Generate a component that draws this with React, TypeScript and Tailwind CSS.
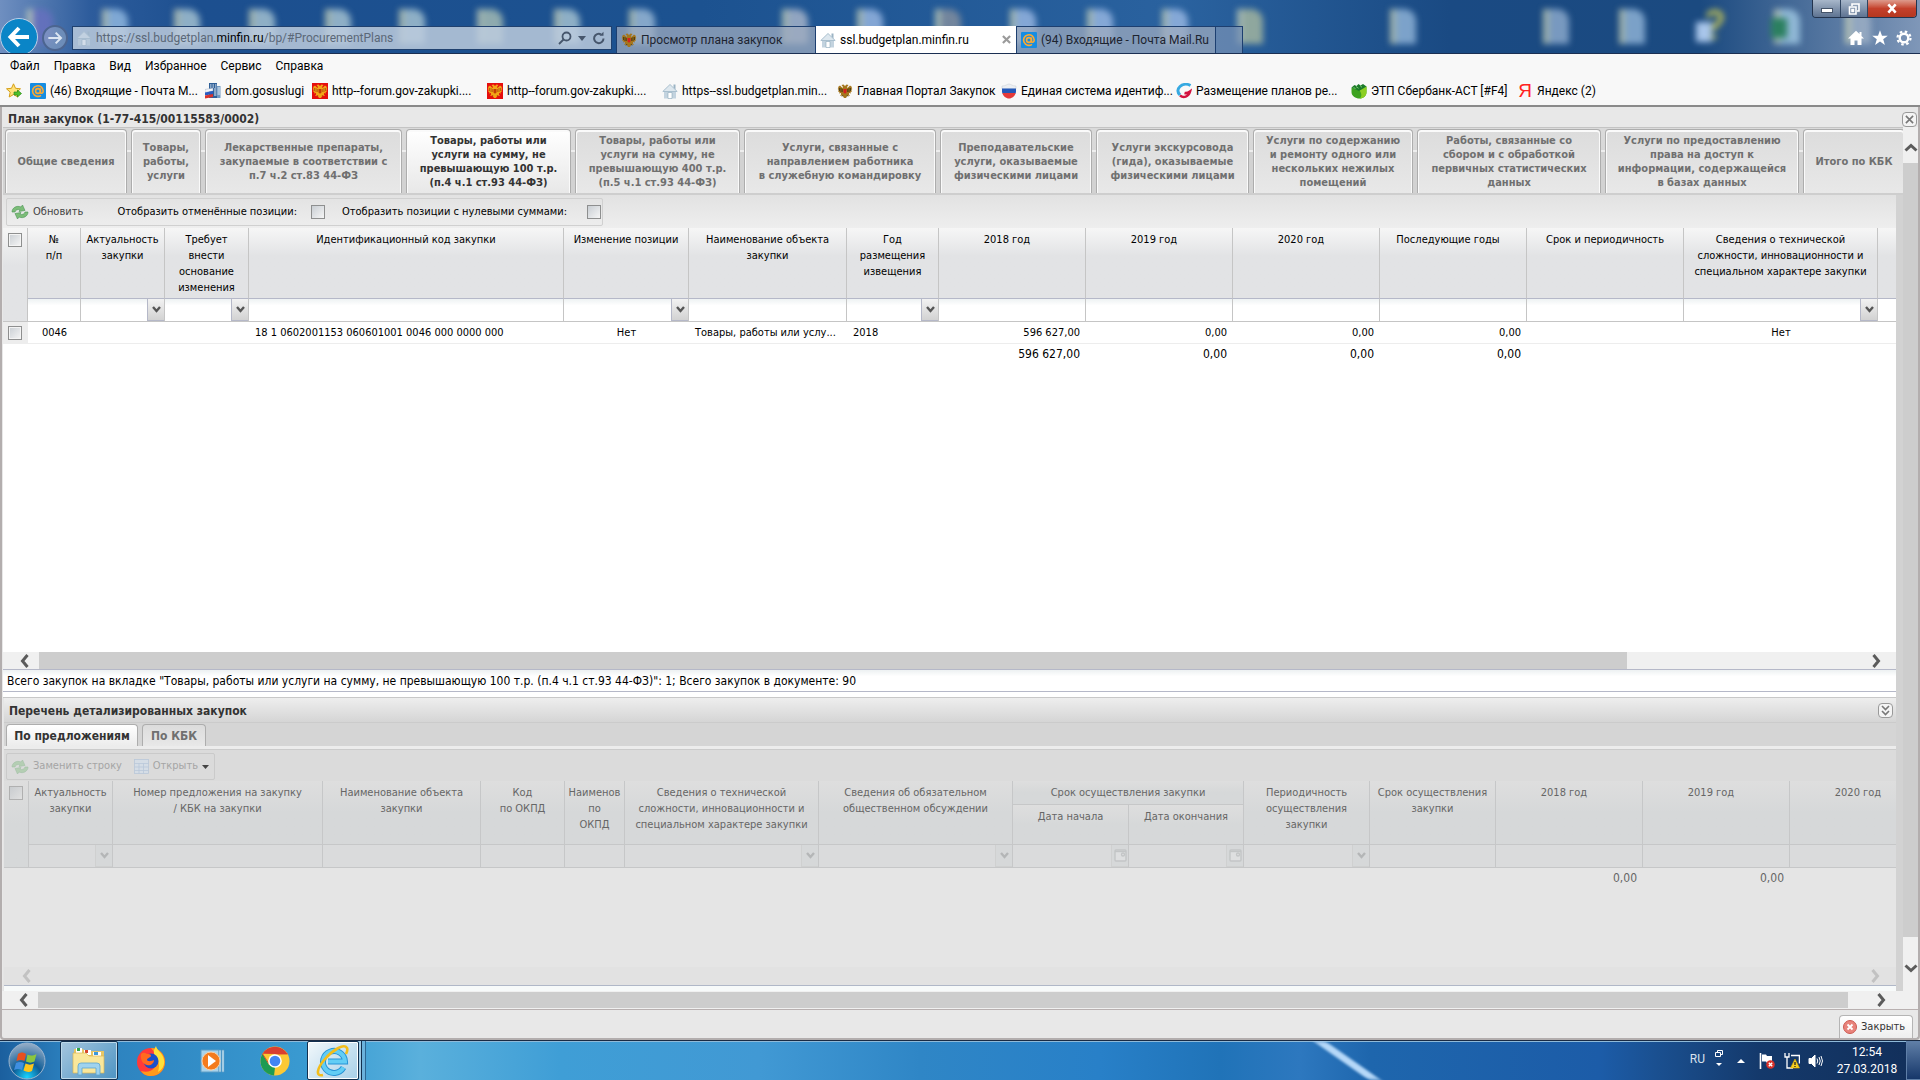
import React from 'react';

type FilterKind = 'none' | 'text' | 'select' | 'date';

interface Column {
  label: string;
  width: string;
  filter: FilterKind;
  numeric?: boolean;
}

const planTabs = [
  { label: 'Общие сведения', width: 'w-[122px]' },
  { label: 'Товары,\nработы,\nуслуги', width: 'w-[70px]' },
  { label: 'Лекарственные препараты,\nзакупаемые в соответствии с\nп.7 ч.2 ст.83 44-ФЗ', width: 'w-[197px]' },
  { label: 'Товары, работы или\nуслуги на сумму, не\nпревышающую 100 т.р.\n(п.4 ч.1 ст.93 44-ФЗ)', width: 'w-[165px]', active: true },
  { label: 'Товары, работы или\nуслуги на сумму, не\nпревышающую 400 т.р.\n(п.5 ч.1 ст.93 44-ФЗ)', width: 'w-[165px]' },
  { label: 'Услуги, связанные с\nнаправлением работника\nв служебную командировку', width: 'w-[192px]' },
  { label: 'Преподавательские\nуслуги, оказываемые\nфизическими лицами', width: 'w-[152px]' },
  { label: 'Услуги экскурсовода\n(гида), оказываемые\nфизическими лицами', width: 'w-[153px]' },
  { label: 'Услуги по содержанию\nи ремонту одного или\nнескольких нежилых\nпомещений', width: 'w-[160px]' },
  { label: 'Работы, связанные со\nсбором и с обработкой\nпервичных статистических\nданных', width: 'w-[184px]' },
  { label: 'Услуги по предоставлению\nправа на доступ к\nинформации, содержащейся\nв базах данных', width: 'w-[194px]' },
  { label: 'Итого по КБК', width: 'w-[102px]' },
];

const planColumns: Column[] = [
  { label: '№\nп/п', width: 'w-[53px]', filter: 'text' },
  { label: 'Актуальность\nзакупки', width: 'w-[84px]', filter: 'select' },
  { label: 'Требует\nвнести\nоснование\nизменения', width: 'w-[84px]', filter: 'select' },
  { label: 'Идентификационный код закупки', width: 'w-[315px]', filter: 'text' },
  { label: 'Изменение позиции', width: 'w-[125px]', filter: 'select' },
  { label: 'Наименование объекта\nзакупки', width: 'w-[158px]', filter: 'text' },
  { label: 'Год\nразмещения\nизвещения', width: 'w-[92px]', filter: 'select' },
  { label: '2018 год', width: 'w-[147px]', filter: 'text', numeric: true },
  { label: '2019 год', width: 'w-[147px]', filter: 'text', numeric: true },
  { label: '2020 год', width: 'w-[147px]', filter: 'text', numeric: true },
  { label: 'Последующие годы', width: 'w-[147px]', filter: 'text', numeric: true },
  { label: 'Срок и периодичность', width: 'w-[157px]', filter: 'text' },
  { label: 'Сведения о технической\nсложности, инновационности и\nспециальном характере закупки', width: 'w-[194px]', filter: 'select' },
];

const planRow = ['0046', '', '', '18 1 0602001153 060601001 0046 000 0000 000', 'Нет', 'Товары, работы или услу...', '2018', '596 627,00', '0,00', '0,00', '0,00', '', 'Нет'];
const planRowAlign = ['text-center', '', '', 'text-left', 'text-center', 'text-left', 'text-left', 'text-right', 'text-right', 'text-right', 'text-right', '', 'text-center'];
const planTotals = ['', '', '', '', '', '', '', '596 627,00', '0,00', '0,00', '0,00', '', ''];

const detailColumns: Column[] = [
  { label: 'Актуальность\nзакупки', width: 'w-[84px]', filter: 'select' },
  { label: 'Номер предложения на закупку\n/ КБК на закупки', width: 'w-[210px]', filter: 'text' },
  { label: 'Наименование объекта\nзакупки', width: 'w-[158px]', filter: 'text' },
  { label: 'Код\nпо ОКПД', width: 'w-[84px]', filter: 'text' },
  { label: 'Наименов\nпо\nОКПД', width: 'w-[60px]', filter: 'text' },
  { label: 'Сведения о технической\nсложности, инновационности и\nспециальном характере закупки', width: 'w-[194px]', filter: 'select' },
  { label: 'Сведения об обязательном\nобщественном обсуждении', width: 'w-[194px]', filter: 'select' },
  { label: 'Дата начала', width: 'w-[116px]', filter: 'date' },
  { label: 'Дата окончания', width: 'w-[115px]', filter: 'date' },
  { label: 'Периодичность\nосуществления\nзакупки', width: 'w-[126px]', filter: 'select' },
  { label: 'Срок осуществления\nзакупки', width: 'w-[126px]', filter: 'text' },
  { label: '2018 год', width: 'w-[147px]', filter: 'text', numeric: true },
  { label: '2019 год', width: 'w-[147px]', filter: 'text', numeric: true },
  { label: '2020 год', width: 'w-[147px]', filter: 'text', numeric: true },
];

/* ---------- small drawings ---------- */

function EagleIcon({ red = false }: { red?: boolean }) {
  const fill = red ? '#f2a516' : '#a5761c';
  return (
    <svg viewBox="0 0 16 16" className="size-4 shrink-0">
      {red && <rect width="16" height="16" fill="#e60d0d" />}
      <path fill={fill} d="M8 3 6.500 1.500 4.500 2l1.500 2-.5 1L3 2.500 1 4l.5 1L.7 6l1 1L1 8.500l1.500.5L2 10.500l2-.5v1.500L3 13l2.500-.5L7 15h2l1.500-2.500L13 13l-1-1.500V10l2 .5L13.500 9l1.500-.5L14.300 7l1-1-.8-1 .5-1L13 2.500 10.500 5 10 4l1.500-2-2-.5z" />
      <path fill="none" d="M2.500 5v3M4 5v4M5.300 6v3M10.700 6v3M12 5v4M13.500 5v3M6 12l-1 1.500M10 12l1 1.500" stroke={red ? '#b0500a' : '#3f3410'} strokeWidth=".8" />
      <path d="M6.500 6h3v3.500L8 10.800 6.500 9.500z" fill={red ? '#c23a06' : '#d41f1f'} />
    </svg>
  );
}

function HouseIcon() {
  return (
    <svg viewBox="0 0 16 16" className="size-4 shrink-0">
      <path d="M2 8h12v7.500H2z" fill="#c3d3df" />
      <path d="M11.500 1.500h2V7l-2-2z" fill="#9bb3c4" />
      <path d="M.8 8.500 8 1.500l7.200 7z" fill="#dde7ee" stroke="#a9bfce" />
      <path d="M6 9.500h4v6H6z" fill="#fff" stroke="#8ba7bb" strokeWidth=".6" />
    </svg>
  );
}

function MailIcon() {
  return (
    <svg viewBox="0 0 16 16" className="size-4 shrink-0">
      <rect width="16" height="16" rx="1" fill="#168de2" />
      <g fill="none" stroke="#ffa930" strokeWidth="1.600">
        <circle cx="8" cy="8" r="2.400" />
        <path d="M10.400 5.500V9c0 2 2.800 1.600 2.800-1A5.300 5.300 0 1 0 11 12.400" />
      </g>
    </svg>
  );
}

function AddFavoriteIcon() {
  return (
    <svg viewBox="0 0 16 16" className="size-4 shrink-0">
      <path d="m7.500.8 2 4.500 5 .5-3.700 3.300 1 4.900-4.300-2.500L3.200 14l1-4.900L.5 5.800l5-.5z" fill="#ffe27a" stroke="#d59f17" />
      <path d="M8 9h3.500V7l4 3.500-4 3.500v-2H8z" fill="#4ec02c" stroke="#2b8a17" strokeWidth=".7" />
    </svg>
  );
}

function BuildingIcon() {
  return (
    <svg viewBox="0 0 16 16" className="size-4 shrink-0">
      <path d="M4 0h8v15H4z" fill="#2f5f97" />
      <path d="M12 3h3.500v12H12z" fill="#6f98c2" />
      <path d="M5 2h1.500M7.500 2H9M10 2h1.500M5 4h1.500M7.500 4H9M10 4h1.500M9 6h2.500M9 8h2.500M9 10h2.500M9 12h2.500M12.500 5h2.500M12.500 7h2.500M12.500 9h2.500M12.500 11h2.500" stroke="#e8f0f8" />
      <path d="M0 6.500 8 5v3L0 9.500z" fill="#f4f6fa" stroke="#8ba0bb" strokeWidth=".4" />
      <path d="M0 9.500 8 8v3l-8 1.500z" fill="#2a5bc0" />
      <path d="M0 12.500 8 11v3L0 15.500z" fill="#d9322c" />
    </svg>
  );
}

function ShieldFlagIcon() {
  return (
    <svg viewBox="0 0 16 16" className="size-4 shrink-0">
      <path d="M1 3c4 0 5-2 7-2s3 2 7 2v3H1z" fill="#eceff3" stroke="#c7ccd3" strokeWidth=".5" />
      <path d="M1 5.500h14V9l-.5 1.500h-13L1 9z" fill="#2458b8" />
      <path d="M1.300 10h13.400C14 13 11 15.500 8 15.500S2 13 1.300 10z" fill="#e53a3a" />
    </svg>
  );
}

function SwirlIcon() {
  return (
    <svg viewBox="0 0 16 16" className="size-4 shrink-0" fill="none">
      <path d="M14.500 2.500C11.500.8 7 .8 4 3.500s-2.500 6 0 8.500" stroke="#36a9e1" strokeWidth="3" />
      <path d="M4 12.500c3.500 2.800 8.500 1.500 10-4-2 1.500-3.500 2-5.500 1.500" stroke="#d3123f" strokeWidth="2.600" />
    </svg>
  );
}

function SberIcon() {
  return (
    <svg viewBox="0 0 16 16" className="size-4 shrink-0">
      <path d="M.5 4.500 8 7l7.500-3.500v5.500c0 4-3 6.500-7 6.500S.5 13 .5 9z" fill="#3ea321" />
      <path d="M8 7l7.500-3.500v5.500c0 4-3 6.500-7 6.500 3-2 2-6-.5-8.500z" fill="#8ccf22" />
      <path d="M.5 4.500 3.500 2l2 1 2-2 2 1.500L12 1l3.500 2.500L8 8z" fill="#1c7a2a" />
      <path d="m2.500 4.500 2 1M5 3.500l2.500 1.800M9 2.500l2 1.800" stroke="#8fe07f" strokeWidth=".8" />
    </svg>
  );
}

function RefreshIcon() {
  return (
    <svg viewBox="0 0 18 16" className="h-4 w-[18px] shrink-0" fill="#7cbd78" stroke="#4b9455" strokeWidth=".6">
      <path d="M1 8c0-4 4.500-7 9-5l1.500-2L14 6.500 8 7.500l1-1.700C6.500 5 4.500 6 4 8z" />
      <path d="M17 8c0 4-4.500 7-9 5l-1.500 2L4 9.500l6-1-1 1.700c2.500.8 4.500-.2 5-2.200z" />
    </svg>
  );
}

function Chevron({ dir, faded = false }: { dir: 'left' | 'right' | 'up' | 'down'; faded?: boolean }) {
  const d = { left: 'M9.500 1 4.500 7l5 6', right: 'M4.500 1l5 6-5 6', up: 'M1.500 9.500 7 4.500l5.500 5', down: 'M1.500 4.500 7 9.500l5.500-5' }[dir];
  return (
    <svg viewBox="0 0 14 14" className="size-[14px] shrink-0" fill="none" stroke={faded ? '#c2c2c2' : '#5b5b5b'} strokeWidth="3">
      <path d={d} />
    </svg>
  );
}

/* ---------- browser frame ---------- */

const desktopIcons = [
  { x: 40, tone: 'bg-[#6a6fc0]' }, { x: 115, tone: 'bg-[#9dc3e8]' }, { x: 187, tone: 'bg-[#b4cfd8]' }, { x: 262, tone: 'bg-[#b4cfd8]' },
  { x: 338, tone: 'bg-[#b4cfd8]' }, { x: 412, tone: 'bg-[#b4cfd8]' }, { x: 490, tone: 'bg-[#b5c9b8]' }, { x: 567, tone: 'bg-[#b4cfd8]' },
  { x: 642, tone: 'bg-[#a9c4de]' }, { x: 795, tone: 'bg-[#b9c0d0]' }, { x: 870, tone: 'bg-[#a4c0ea]' }, { x: 948, tone: 'bg-[#8e959f]' },
  { x: 1023, tone: 'bg-[#a4c0ea]' }, { x: 1100, tone: 'bg-[#a4c0ea]' }, { x: 1175, tone: 'bg-[#a4c0ea]' }, { x: 1250, tone: 'bg-[#b3c0a0]' },
  { x: 1403, tone: 'bg-[#9dbfe0]' }, { x: 1556, tone: 'bg-[#98b4d4]' }, { x: 1632, tone: 'bg-[#9dbfe0]' },
  { x: 1787, tone: 'bg-[#a9d0ea]' }, { x: 1858, tone: 'bg-[#a3b4c8]' },
];

function BrowserHeader() {
  return (
    <header className="relative flex h-[54px] shrink-0 overflow-hidden border-b border-[#1b2f52] bg-[linear-gradient(90deg,#6f8fc0_0px,#2d5c9c_90px,#1c4f8f_200px,#1c5290_700px,#2a629f_1180px,#1a4a83_1450px,#1b4a80_1700px,#6c88ad_1880px,#7f97b8_1920px)]">
      <div className="absolute inset-0 blur-[3px]" aria-hidden="true">
        {desktopIcons.map((icon) => (
          <span key={icon.x} className={`absolute top-[9px] flex h-[35px] w-[26px] -translate-x-1/2 rounded-tr-xl opacity-75 ${icon.tone}`} style={{ left: icon.x }}>
            <span className="h-full w-[6px] bg-[#c8d2b8]" />
          </span>
        ))}
        {/* help shortcut: sheet with a yellow question mark */}
        <svg viewBox="0 0 32 36" className="absolute top-[9px] left-[1694px] h-9 w-8" fill="none">
          <path d="M2 13h16v20H2z" fill="#a9c6ea" />
          <path d="M14 8c2-8 15-6 13 2-1 5-7 5-7 11M20 26v4" stroke="#b5b95a" strokeWidth="5" />
        </svg>
        <span className="absolute top-[18px] left-[1771px] h-5 w-4 bg-[#2c8060]" />
      </div>
      <div className="relative flex w-[1244px] items-end">
        <button aria-label="Назад" className="mt-[18px] flex size-[38px] shrink-0 self-start items-center justify-center rounded-full border border-[#bcd0e8] bg-[#0a85c7]">
          <svg viewBox="0 0 24 24" className="size-6" fill="none" stroke="#fff" strokeWidth="4">
            <path d="M12 3 3.500 12l8.500 9M4 12h18" />
          </svg>
        </button>
        <button aria-label="Вперёд" className="mt-[25px] ml-1 flex size-[26px] shrink-0 self-start items-center justify-center rounded-full border-2 border-[#4c6590] bg-[#8ba3c4]/60">
          <svg viewBox="0 0 24 24" className="size-4" fill="none" stroke="#dbe5f2" strokeWidth="3">
            <path d="m13 4 8 8-8 8M21 12H2" />
          </svg>
        </button>
        <div className="mb-[3px] ml-1 flex h-6 w-[540px] shrink-0 items-center gap-2 border border-[#20416f] bg-[#bccbdd]/85 pr-[5px] pl-[3px]">
          <span className="opacity-50"><HouseIcon /></span>
          <div className="-ml-1 flex-1 text-xs whitespace-nowrap text-[#5b6878]">
            https://ssl.budgetplan.<span className="text-black">minfin.ru</span>/bp/#ProcurementPlans
          </div>
          <div className="flex items-center gap-[6px]">
            <svg viewBox="0 0 14 14" className="size-[14px]" fill="none" stroke="#46566c" strokeWidth="1.800">
              <circle cx="8.500" cy="5.500" r="4" />
              <path d="M5.500 8.500 1 13" />
            </svg>
            <svg viewBox="0 0 8 5" className="h-[5px] w-2" fill="#46566c"><path d="M0 0h8L4 5z" /></svg>
            <svg viewBox="0 0 14 14" className="size-[14px]" fill="none" stroke="#46566c" strokeWidth="2">
              <path d="M11.500 7.500A4.700 4.700 0 1 1 9 3.300" />
              <path d="M7.500 4.800h4V.8z" fill="#46566c" stroke="none" />
            </svg>
          </div>
        </div>
        <nav className="ml-1 flex h-[27px] min-w-0 text-xs text-[#1d2430]">
          <button className="flex w-[200px] items-center gap-1 border border-b-0 border-[#1d3f70] bg-[#9dabbf]/75 px-1 whitespace-nowrap">
            <EagleIcon />
            Просмотр плана закупок
          </button>
          <button className="flex w-[200px] items-center gap-1 bg-white px-1 whitespace-nowrap text-black">
            <HouseIcon />
            ssl.budgetplan.minfin.ru
            <svg viewBox="0 0 10 10" className="mr-px ml-auto size-[9px]" stroke="#9b9b9b" strokeWidth="2.400"><path d="m1 1 8 8M9 1 1 9" /></svg>
          </button>
          <button className="flex w-[200px] items-center gap-1 border border-b-0 border-[#1d3f70] bg-[#9dabbf]/75 px-1 whitespace-nowrap">
            <MailIcon />
            (94) Входящие - Почта Mail.Ru
          </button>
          <button aria-label="Новая вкладка" className="w-[27px] border-t border-r border-[#1d3f70] bg-[#7590b4]/75" />
        </nav>
      </div>
      <div className="relative ml-auto flex flex-col items-end pr-[3px]">
        <div className="flex h-[18px] overflow-hidden rounded-b border border-t-0 border-[#23344e]">
          <button aria-label="Свернуть" className="flex w-7 items-center justify-center border-r border-[#2f4460] bg-gradient-to-b from-[#a8b7ca] to-[#5e7391]">
            <span className="mt-1 h-[5px] w-3 border border-[#45546a] bg-white" />
          </button>
          <button aria-label="Развернуть" className="flex w-[27px] items-center justify-center border-r border-[#2f4460] bg-gradient-to-b from-[#a8b7ca] to-[#5e7391]">
            <svg viewBox="0 0 12 12" className="size-3" fill="none" stroke="#fff" strokeWidth="1.600"><path d="M4 3V1h7v7H9M1.500 4H8v7H1.500zM4 6.500h1.500v2H4z" /></svg>
          </button>
          <button aria-label="Закрыть окно" className="flex w-12 items-center justify-center bg-gradient-to-b from-[#dd9a8c] via-[#c4402b] to-[#b5371f]">
            <svg viewBox="0 0 12 12" className="h-[11px] w-3" stroke="#fff" strokeWidth="2.800"><path d="m2 1.500 8 9M10 1.500l-8 9" /></svg>
          </button>
        </div>
        <div className="mt-3 flex items-center gap-2 pr-[5px]">
          <svg viewBox="0 0 16 16" className="size-4" fill="#fff"><path d="M8 .8 0 8.500h2.500V15H6.500v-4.500h3V15h4V8.500H16l-2.500-2.500V2h-2v2z" /></svg>
          <svg viewBox="0 0 16 16" className="size-4" fill="#fff"><path d="m8 .3 2 5.400h5.800l-4.600 3.500 1.700 5.800L8 11.600 3.100 15l1.700-5.800L.2 5.700H6z" /></svg>
          <svg viewBox="0 0 16 16" className="size-4" fill="none" stroke="#fff">
            <circle cx="8" cy="8" r="4.300" strokeWidth="2.400" />
            <circle cx="8" cy="8" r="6.500" strokeWidth="2.200" strokeDasharray="2.550 2.550" />
          </svg>
        </div>
      </div>
    </header>
  );
}

const menuItems = ['Файл', 'Правка', 'Вид', 'Избранное', 'Сервис', 'Справка'];

const favorites = [
  { label: '(46) Входящие - Почта М...', icon: <MailIcon />, width: 'w-[175px]' },
  { label: 'dom.gosuslugi', icon: <BuildingIcon />, width: 'w-[107px]' },
  { label: 'http--forum.gov-zakupki....', icon: <EagleIcon red />, width: 'w-[175px]' },
  { label: 'http--forum.gov-zakupki....', icon: <EagleIcon red />, width: 'w-[175px]' },
  { label: 'https--ssl.budgetplan.min...', icon: <HouseIcon />, width: 'w-[175px]' },
  { label: 'Главная Портал Закупок', icon: <EagleIcon />, width: 'w-[164px]' },
  { label: 'Единая система идентиф...', icon: <ShieldFlagIcon />, width: 'w-[175px]' },
  { label: 'Размещение планов ре...', icon: <SwirlIcon />, width: 'w-[175px]' },
  { label: 'ЭТП Сбербанк-АСТ [#F4]', icon: <SberIcon />, width: 'w-[166px]' },
  { label: 'Яндекс (2)', icon: <span className="w-4 text-center font-['Liberation_Sans'] text-[19px] leading-4 text-[#f22]">Я</span>, width: 'w-[100px]' },
];

function BrowserMenus() {
  return (
    <div className="shrink-0 border-b-2 border-[#8a8a8a] bg-[#f8f8f8] text-xs text-black">
      <nav className="flex h-6 items-center gap-[14px] px-[10px]">
        {menuItems.map((item) => (
          <button key={item}>{item}</button>
        ))}
      </nav>
      <nav className="flex h-[27px] items-center overflow-hidden pb-px pl-[6px]">
        <button aria-label="Добавить в избранное" className="mr-2"><AddFavoriteIcon /></button>
        {favorites.map((fav, i) => (
          <a key={i} href="#" className={`flex shrink-0 items-center gap-1 whitespace-nowrap ${fav.width}`}>
            {fav.icon}
            {fav.label}
          </a>
        ))}
      </nav>
    </div>
  );
}

/* ---------- grid parts ---------- */

function Tick({ label, faded = false }: { label: string; faded?: boolean }) {
  return (
    <input
      type="checkbox"
      aria-label={label}
      className={`block size-[14px] shrink-0 appearance-none border bg-gradient-to-br ${faded ? 'border-[#b0b0b0] from-[#c9cccf] to-[#e0e0e0]' : 'border-[#8e8f8f] from-[#c9ced3] to-[#f6f6f6] shadow-[inset_0_0_0_1px_#f4f4f4]'}`}
    />
  );
}

function FilterCell({ column, faded }: { column: Column; faded: boolean }) {
  const box = faded ? 'bg-transparent' : 'bg-gradient-to-b from-[#eef2f3] to-white to-30%';
  const trigger = faded ? 'border-[#cfd0d0] bg-[#d6d8d9]' : 'border-[#b5b8c8] bg-gradient-to-b from-[#f2f2f2] to-[#d2d2d2]';
  if (column.filter === 'select') {
    return (
      <div className="relative h-full">
        <select aria-label={column.label} className={`block h-full w-full appearance-none outline-none ${box}`} disabled={faded} />
        <span className={`pointer-events-none absolute top-0 right-0 flex h-full w-[17px] items-center justify-center border-b border-l ${trigger}`}>
          <svg viewBox="0 0 9 7" className="mb-px h-[7px] w-[9px]" fill="none" stroke={faded ? '#b4b6b7' : '#555'} strokeWidth="2.400"><path d="m1 1 3.500 4L8 1" /></svg>
        </span>
      </div>
    );
  }
  return (
    <div className="relative h-full">
      <input aria-label={column.label} className={`block h-full w-full outline-none ${box}`} disabled={faded} />
      {column.filter === 'date' && (
        <span className={`pointer-events-none absolute top-0 right-0 flex h-full w-[17px] items-center justify-center border-b border-l ${trigger}`}>
          <svg viewBox="0 0 13 13" className="size-[13px]" fill="#dedfe0" stroke="#c3c5c6" strokeWidth="1.400">
            <rect x="1" y="1" width="11" height="11" rx="1" />
            <path d="M1 2.500h11" />
            <circle cx="9" cy="5.500" r="1.500" />
          </svg>
        </span>
      )}
    </div>
  );
}

const headText = 'whitespace-pre text-center leading-4 font-normal overflow-hidden';

function PlanGrid() {
  return (
    <table className="w-full table-fixed border-separate border-spacing-0 text-[11px] text-black">
      <colgroup>
        <col className="w-[25px]" />
        {planColumns.map((c) => <col key={c.label} className={c.width} />)}
        <col />
      </colgroup>
      <thead>
        <tr className="h-[71px] align-top">
          <th rowSpan={2} className="border-r border-b border-[#c5c5c5] bg-gradient-to-b from-[#f6f6f6] to-[#e2e3e5] to-40% pt-[5px] pl-[5px]">
            <Tick label="Выбрать все" />
          </th>
          {planColumns.map((c) => (
            <th key={c.label} className={`border-r border-b border-r-[#c5c5c5] border-b-[#b5b8c8] bg-gradient-to-b from-[#f6f6f6] to-[#e2e3e5] to-40% pt-1 ${headText} ${c.numeric ? 'pr-[10px]' : ''}`}>
              {c.label}
            </th>
          ))}
          <th className="border-b border-[#b5b8c8] bg-gradient-to-b from-[#f6f6f6] to-[#e2e3e5] to-40%" />
        </tr>
        <tr className="h-[23px]">
          {planColumns.map((c) => (
            <td key={c.label} className="h-[23px] border-r border-b border-[#c5c5c5] p-0"><FilterCell column={c} faded={false} /></td>
          ))}
          <td className="border-b border-[#c5c5c5]" />
        </tr>
      </thead>
      <tbody>
        <tr className="h-[22px]">
          <td className="border-r border-b border-[#ededed] bg-[#ededed] pl-[5px]"><Tick label="Выбрать 0046" /></td>
          {planRow.map((cell, i) => (
            <td key={i} className={`border-b border-[#ededed] px-[6px] pt-[2px] whitespace-nowrap ${planRowAlign[i]}`}>{cell}</td>
          ))}
          <td className="border-b border-[#ededed]" />
        </tr>
        <tr className="h-5 text-xs">
          <td />
          {planTotals.map((cell, i) => (
            <td key={i} className="px-[6px] text-right whitespace-nowrap">{cell}</td>
          ))}
          <td />
        </tr>
      </tbody>
    </table>
  );
}

function DetailGrid() {
  const plain = 'border-r border-b border-[#c6c7c8] bg-gradient-to-b from-[#dedede] to-[#d6d8d9] to-50%';
  return (
    <table className="w-[1933px] table-fixed border-separate border-spacing-0 text-[11px] text-[#666]">
      <colgroup>
        <col className="w-[25px]" />
        {detailColumns.map((c) => <col key={c.label} className={c.width} />)}
      </colgroup>
      <thead>
        <tr className="h-6 align-top">
          <th rowSpan={3} className={`pt-[5px] pl-[5px] ${plain}`}><Tick label="Выбрать все строки" faded /></th>
          {detailColumns.slice(0, 7).map((c) => (
            <th key={c.label} rowSpan={2} className={`pt-1 ${plain} ${headText}`}>{c.label}</th>
          ))}
          <th colSpan={2} className={`pt-1 ${plain} ${headText}`}>Срок осуществления закупки</th>
          {detailColumns.slice(9).map((c) => (
            <th key={c.label} rowSpan={2} className={`pt-1 ${plain} ${headText} ${c.numeric ? 'pr-[10px]' : ''}`}>{c.label}</th>
          ))}
        </tr>
        <tr className="h-10 align-top">
          {detailColumns.slice(7, 9).map((c) => (
            <th key={c.label} className={`pt-1 ${plain} ${headText}`}>{c.label}</th>
          ))}
        </tr>
        <tr className="h-[23px]">
          {detailColumns.map((c) => (
            <td key={c.label} className="h-[23px] border-r border-b border-[#c6c7c8] bg-[#dadbdc] p-0"><FilterCell column={c} faded /></td>
          ))}
        </tr>
      </thead>
      <tbody>
        <tr className="h-5 text-xs">
          <td />
          {detailColumns.map((c, i) => (
            <td key={c.label} className="px-[6px] text-right">{i === 11 || i === 12 ? '0,00' : ''}</td>
          ))}
        </tr>
      </tbody>
    </table>
  );
}

/* ---------- application window ---------- */

function PlanTabs() {
  return (
    <div className="flex shrink-0 gap-1 overflow-hidden border-t border-b-2 border-t-[#c4c4c4] border-b-[#cecece] bg-[linear-gradient(#dadada_0px,#d8d8d8_22px,#eee_22px,#eee_24px,#d2d2d2_24px)] pt-px pl-[2px]">
      {planTabs.map((tab) => (
        <button
          key={tab.label}
          className={`flex h-16 shrink-0 items-center justify-center rounded-t border border-b-0 border-[#adadad] pt-px text-[11px] leading-[14px] font-bold whitespace-pre shadow-[inset_0_1px_0_1px_#fafafa] ${tab.width} ${tab.active ? 'bg-gradient-to-b from-white to-[#e8e8e8] text-[#333]' : 'bg-gradient-to-b from-[#dcdcdc] to-[#e8e8e8] text-[#707070]'}`}
        >
          {tab.label}
        </button>
      ))}
    </div>
  );
}

function PlanWindow() {
  return (
    <main className="flex min-h-0 flex-1 flex-col rounded-b border-x-2 border-b-2 border-[#b3aeae] bg-[#e8e8e8] font-['DejaVu_Sans_Condensed','DejaVu_Sans',sans-serif]">
      <div className="flex h-5 shrink-0 items-center justify-between pr-px pl-[6px]">
        <h1 className="pt-1 text-xs leading-4 font-bold text-[#333]">План закупок (1-77-415/00115583/0002)</h1>
        <button aria-label="Закрыть план" className="mt-1 flex size-[15px] items-center justify-center rounded-sm border border-[#999] bg-[#f4f4f4]">
          <svg viewBox="0 0 10 10" className="size-[9px]" stroke="#777" strokeWidth="1.800"><path d="m1 1 8 8M9 1 1 9" /></svg>
        </button>
      </div>
      <div className="flex min-h-0 flex-1">
        <div className="flex min-w-0 flex-1 flex-col pl-px">
          <PlanTabs />
          <div className="flex min-h-0 flex-1 flex-col border-r-7 border-[#d2d2d2] bg-white">
            <div className="h-[33px] shrink-0 bg-gradient-to-b from-[#e2e2e2] to-[#eee] pt-[3px] pl-[3px]">
              <div className="flex h-7 w-[597px] items-center rounded-xs border border-[#d0d0d0] text-[11px] whitespace-nowrap text-black">
                <button className="flex items-center gap-1 px-1 text-[#444]">
                  <RefreshIcon />
                  Обновить
                </button>
                <label htmlFor="cancelled" className="ml-auto">Отобразить отменённые позиции:</label>
                <input id="cancelled" type="checkbox" className="ml-[14px] size-[14px] shrink-0 appearance-none border border-[#8e8f8f] bg-gradient-to-br from-[#c9ced3] to-[#f6f6f6]" />
                <label htmlFor="zero" className="ml-[17px]">Отобразить позиции с нулевыми суммами:</label>
                <input id="zero" type="checkbox" className="mr-px ml-5 size-[14px] shrink-0 appearance-none border border-[#8e8f8f] bg-gradient-to-br from-[#c9ced3] to-[#f6f6f6]" />
              </div>
            </div>
            <div className="min-h-[140px] flex-1 overflow-hidden">
              <PlanGrid />
            </div>
            <div className="flex h-[17px] shrink-0 items-center bg-[#f0f0f0]">
              <div className="flex w-9 justify-center pl-2"><Chevron dir="left" /></div>
              <div className="h-full flex-1"><div className="h-full w-[88%] bg-[#cdcdcd]" /></div>
              <div className="flex w-[52px] justify-center pl-3"><Chevron dir="right" /></div>
            </div>
            <div className="h-[23px] shrink-0 border-y border-[#b5b8c8] bg-gradient-to-b from-[#edf1f2] to-white to-30% pl-1 text-xs leading-[22px] whitespace-nowrap text-black">
              Всего закупок на вкладке "Товары, работы или услуги на сумму, не превышающую 100 т.р. (п.4 ч.1 ст.93 44-ФЗ)": 1; Всего закупок в документе: 90
            </div>
            <DetailPanel />
          </div>
        </div>
        <div className="flex w-[15px] shrink-0 flex-col items-center bg-[#f0f0f0]">
          <div className="flex h-9 shrink-0 items-end pb-2"><Chevron dir="up" /></div>
          <div className="w-full flex-1 bg-[#cdcdcd]" />
          <div className="flex h-[54px] shrink-0 items-center pt-2"><Chevron dir="down" /></div>
        </div>
      </div>
      <div className="flex h-[19px] shrink-0 items-center border-b border-[#b8b0b0] bg-[#f0f0f0]">
        <div className="flex w-9 justify-center pl-2"><Chevron dir="left" /></div>
        <div className="h-4 flex-1 bg-[#cdcdcd]" />
        <div className="flex w-[70px] justify-center pr-1"><Chevron dir="right" /></div>
      </div>
      <div className="flex h-7 shrink-0 items-end justify-end pr-[5px]">
        <button className="flex h-[23px] w-[74px] items-center gap-1 rounded-t border border-b-0 border-[#b5b5b5] bg-gradient-to-b from-white to-[#eee] px-[3px] text-[11px] text-[#333]">
          <svg viewBox="0 0 14 14" className="size-[14px] shrink-0">
            <circle cx="7" cy="7" r="6.500" fill="#e8837b" stroke="#cc5a51" />
            <path d="m4.500 4.500 5 5m0-5-5 5" stroke="#fff" strokeWidth="1.800" />
          </svg>
          Закрыть
        </button>
      </div>
    </main>
  );
}

function DetailPanel() {
  return (
    <section className="mt-[5px] shrink-0 border-t border-[#c8c8c8] bg-[#e5e5e5] pl-px">
      <div className="flex h-[25px] items-center justify-between border-b border-[#cbcbcb] bg-gradient-to-b from-[#eee] to-[#d5d5d5] pr-[3px] pl-[5px]">
        <h2 className="pt-[2px] text-xs font-bold text-[#333]">Перечень детализированных закупок</h2>
        <button aria-label="Свернуть панель" className="flex size-[15px] items-center justify-center rounded-sm border border-[#999] bg-[#f4f4f4]">
          <svg viewBox="0 0 9 11" className="h-[11px] w-[9px]" fill="none" stroke="#777" strokeWidth="1.600"><path d="m1 1 3.500 3.500L8 1M1 6l3.500 3.500L8 6" /></svg>
        </button>
      </div>
      <div className="flex h-[26px] gap-1 border-b-3 border-[#ececec] bg-[#d5d5d5] pt-px pl-[2px] text-xs font-bold">
        <button className="w-[132px] rounded-t border border-b-0 border-[#adadad] bg-gradient-to-b from-white to-[#ececec] pt-px text-[#333]">По предложениям</button>
        <button className="w-16 rounded-t border border-b-0 border-[#adadad] bg-gradient-to-b from-[#dcdcdc] to-[#e8e8e8] pt-px text-[#707070]">По КБК</button>
      </div>
      <div className="h-8 border-t border-[#cbcbcb] bg-[#dbdbdb] pt-[3px] pl-[2px]">
        <div className="flex h-[27px] w-[209px] items-center rounded-xs border border-[#cacaca] text-[11px] whitespace-nowrap text-[#a5a5a5]">
          <button className="flex items-center gap-1 pl-1" disabled>
            <span className="opacity-40"><RefreshIcon /></span>
            Заменить строку
          </button>
          <button className="ml-auto flex items-center gap-1 pr-[5px]" disabled>
            <svg viewBox="0 0 15 15" className="size-[15px]" fill="#d5dde6" stroke="#b9c8d9" strokeWidth=".8">
              <rect x=".5" y=".5" width="14" height="14" />
              <path d="M.5 4.500h14M5 4.500v10M9.500 4.500v10M.5 8h14M.5 11.500h14" />
            </svg>
            Открыть
            <svg viewBox="0 0 7 4" className="h-1 w-[7px]" fill="#444"><path d="M0 0h7L3.500 4z" /></svg>
          </button>
        </div>
      </div>
      <div className="overflow-hidden"><DetailGrid /></div>
      <div className="h-[79px]" />
      <div className="flex h-[19px] items-center justify-between border-b border-[#b0b8c8] bg-[#e2e2e2] pr-[14px] pl-4">
        <Chevron dir="left" faded />
        <Chevron dir="right" faded />
      </div>
      <div className="h-[5px] bg-[#f7fafa]" />
    </section>
  );
}

/* ---------- taskbar ---------- */

function StartOrb() {
  return (
    <svg viewBox="0 0 38 38" className="size-[38px]">
      <defs>
        <radialGradient id="orb" cx=".5" cy=".95" r=".9">
          <stop offset="0" stopColor="#18d4ff" />
          <stop offset=".45" stopColor="#0d5c96" />
          <stop offset="1" stopColor="#8da8c4" />
        </radialGradient>
      </defs>
      <circle cx="19" cy="19" r="18" fill="url(#orb)" stroke="#9bb4cd" />
      <path d="M10 12c3-2 5-2 8 0l-1.500 7c-3-1.500-5-1.500-8 0z" fill="#e8501e" />
      <path d="M19.500 12.500c3 1.500 5 1.500 9-.5l-2 7.500c-3 1.500-5.500 1.500-8.500 0z" fill="#8cc63e" />
      <path d="M8 21c3-1.500 5-1.500 8 0l-2 7c-3-1.500-5-1.500-8 0z" fill="#3f8fe0" />
      <path d="M17.500 21.500c3 1.500 5.500 1.500 8.500 0l-2 7.500c-3 1.500-5.500 1-8.500-.5z" fill="#fcc51c" />
    </svg>
  );
}

function ExplorerIcon() {
  return (
    <svg viewBox="0 0 34 30" className="h-[30px] w-[34px]">
      <path d="M2 3h9l2 2h19v22H2z" fill="#e7c664" />
      <path d="M4 2h6v5H4z" fill="#fff" />
      <path d="M5 2h3v3H5z" fill="#2da44a" />
      <path d="M12 4h7v5h-7z" fill="#fff" />
      <path d="M13 4h3v3h-3z" fill="#d8452d" />
      <path d="M21 6h8v4h-8z" fill="#fff" />
      <path d="M22 6h4v3h-4z" fill="#3a98dc" />
      <path d="M1 7h13l3 3h15v17H1z" fill="#f9e79b" stroke="#d8b653" strokeWidth=".7" />
      <path d="M6 29V20q0-3 3-3h16q3 0 3 3v9h-4v-7H10v7z" fill="#9fd3ef" stroke="#5ba5cf" strokeWidth=".8" />
    </svg>
  );
}

function FirefoxIcon() {
  return (
    <svg viewBox="0 0 32 32" className="size-8">
      <circle cx="16" cy="17" r="14" fill="#ff3a3a" />
      <path d="M16 3c8 0 14 6 14 14s-6 14-14 14c-5 0-8-2-10-5 10 3 17-4 16-12-.5-4-3-7-6-11z" fill="#ff9a1a" />
      <path d="M21 1c1 5 7 7 8 14 1 5-2 10-6 12 2-7 1-12-3-16-2-3-1-7 1-10z" fill="#ffe03a" />
      <circle cx="16" cy="16" r="7.500" fill="#1c4fc9" />
      <path d="M6 9c2-2 4-1 6 0 2 0 4 0 4 2-1 2-4 2-4 4 1 2 5 1 7 0 0 4-4 6-7 5-4-1-7-5-6-11z" fill="#ff6a1f" />
    </svg>
  );
}

function MediaIcon() {
  return (
    <svg viewBox="0 0 28 28" className="size-7">
      <path d="M2 3h18v22H2z" fill="#a8d3ec" stroke="#5d9cc4" />
      <path d="M20 3h2v22h-2zM23 3h2v22h-2z" fill="#cbe6f5" stroke="#5d9cc4" strokeWidth=".7" />
      <circle cx="12" cy="14" r="9" fill="#f47b1d" stroke="#fbd0a4" />
      <path d="m9 8 8 6-8 6z" fill="#fff" />
    </svg>
  );
}

function ChromeIcon() {
  return (
    <svg viewBox="0 0 32 32" className="size-[30px]">
      <circle cx="16" cy="16" r="15.500" fill="#fcc934" />
      <path d="M2.600 8.300A15.500 15.500 0 0 1 29.400 8.500H16z" fill="#d93f30" />
      <path d="M2.600 8.300 9.500 20 16 23l-1 8.500A15.500 15.500 0 0 1 2.600 8.300z" fill="#1e9b52" />
      <path d="M16 8.500h13.500M2.600 8.300 10 19.500" stroke="#d93f30" />
      <circle cx="16" cy="16" r="7.300" fill="#fff" />
      <circle cx="16" cy="16" r="5.700" fill="#4285f4" />
    </svg>
  );
}

function ExplorerBrowserIcon() {
  return (
    <svg viewBox="0 0 34 34" className="size-[34px]" fill="none">
      <path d="M27.500 23.500A11 11 0 1 1 29 17.500H12" stroke="#2793d6" strokeWidth="6" />
      <path d="M27.500 23.500A11 11 0 1 1 29 17.500H12" stroke="#62cdf5" strokeWidth="4" />
      <path d="M7 31C-1 33 1 24 9 15S28-1 31 4c1 2 0 4-1 6" stroke="#f3bd1b" strokeWidth="2.600" />
    </svg>
  );
}

function Taskbar() {
  return (
    <footer className="relative flex h-10 shrink-0 items-stretch overflow-hidden border-t border-[#1a2b44] bg-[linear-gradient(90deg,#1b5f9e_0px,#2a7dbb_60px,#3b9dd3_330px,#5ab0dc_420px,#3f9ed6_560px,#4199d4_760px,#2f86c6_920px,#2880c8_1100px,#2073b8_1220px,#2d78bf_1300px,#1e66ad_1370px,#1c5ca8_1600px,#1a4f8f_1660px,#14396b_1760px,#122f5a_1920px)] shadow-[inset_0_1px_0_#8fbad9]">
      {/* light ray of the wallpaper behind the glass */}
      <span className="absolute top-0 left-[1341px] h-full w-3 skew-x-[55deg] bg-[#b5d8f8] blur-[2px]" aria-hidden="true" />
      <button aria-label="Пуск" className="ml-2 flex items-center"><StartOrb /></button>
      <button aria-label="Проводник" className="ml-[14px] flex w-[58px] items-center justify-center rounded-xs border border-[#12304f] bg-[linear-gradient(135deg,#a5c6de,#4d94c3)] shadow-[inset_0_0_0_1px_#bcd9ea]"><ExplorerIcon /></button>
      <button aria-label="Firefox" className="ml-[5px] flex w-14 items-center justify-center"><FirefoxIcon /></button>
      <button aria-label="Медиаплеер" className="ml-[6px] flex w-14 items-center justify-center"><MediaIcon /></button>
      <button aria-label="Chrome" className="ml-[6px] flex w-14 items-center justify-center"><ChromeIcon /></button>
      <button aria-label="Internet Explorer" className="ml-1 flex w-[52px] items-center justify-center rounded-xs border border-[#12304f] bg-[linear-gradient(135deg,#f2f8fb,#a8d0e8)] shadow-[inset_0_0_0_1px_#fff]"><ExplorerBrowserIcon /></button>
      <span className="w-[3px] border-r border-[#12304f] bg-[#9fcbe5]" />
      <span className="w-1 border-r border-[#2c6793] bg-[#6bb2dc]" />
      <div className="ml-auto flex items-center text-xs text-white">
        <span className="mb-1 text-[#d8e2ee]">RU</span>
        <svg viewBox="0 0 8 18" className="mb-1 ml-[10px] h-[18px] w-2" fill="none" stroke="#fff"><path d="M2.500 2.500v-2h5v4h-2M.5 2.500h5v4h-5z" /><path d="M1 13h6l-3 3z" fill="#fff" stroke="none" /></svg>
        <svg viewBox="0 0 8 4" className="ml-[14px] h-1 w-2" fill="#fff"><path d="M0 4h8L4 0z" /></svg>
        <svg viewBox="0 0 16 16" className="ml-[14px] size-4"><path d="M1.500 0v16" stroke="#fff" strokeWidth="1.600" /><path d="M3 1.500h4l1 1.500h5v7H8L7 8.500H3z" fill="#fff" /><circle cx="11.500" cy="11.500" r="4.300" fill="#d8322a" /><path d="m9.800 9.800 3.400 3.400m0-3.400-3.400 3.400" stroke="#fff" strokeWidth="1.400" /></svg>
        <svg viewBox="0 0 16 16" className="ml-[9px] size-4" fill="none" stroke="#fff" strokeWidth="1.300"><path d="M1 0v4h4V0M3 4v11h6M7 2.500h8.400v8" /><path d="m11 6 4.500 9h-9z" fill="#f8d120" stroke="#e0b000" strokeWidth=".6" /><path d="M11 9v3M11 13v1" stroke="#222" /></svg>
        <svg viewBox="0 0 16 16" className="ml-2 size-4" fill="none" stroke="#fff"><path d="M1 5.500h2.500L7 2v12l-3.500-3.500H1z" fill="#fff" /><path d="M9 5.500q1.500 2.500 0 5M11 4q2.500 4 0 8M13 3q3 5 0 10" /></svg>
        <div className="ml-2 w-[70px] text-center leading-[17px]">
          <div>12:54</div>
          <div>27.03.2018</div>
        </div>
        <button aria-label="Показать рабочий стол" className="ml-1 h-full w-[14px] border border-r-0 border-[#5f7fa8] bg-gradient-to-b from-[#5f7ea6] to-[#16376a]" />
      </div>
    </footer>
  );
}

export default function App() {
  return (
    <div className="flex h-screen min-h-[900px] w-full flex-col overflow-hidden bg-[#e8e8e8] font-['Roboto','Noto_Sans',sans-serif]">
      <BrowserHeader />
      <BrowserMenus />
      <PlanWindow />
      <Taskbar />
    </div>
  );
}
